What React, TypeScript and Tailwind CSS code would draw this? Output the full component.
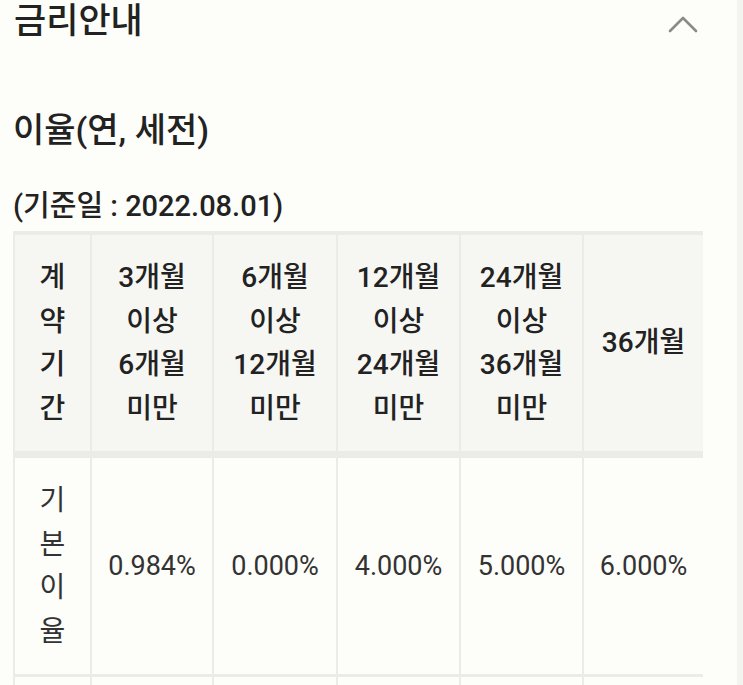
const font = { fontFamily: "Roboto, 'Noto Sans CJK KR', sans-serif" }

const headers = [
  ['3개월', '이상', '6개월', '미만'],
  ['6개월', '이상', '12개월', '미만'],
  ['12개월', '이상', '24개월', '미만'],
  ['24개월', '이상', '36개월', '미만'],
  ['36개월'],
]

const rates = ['0.984%', '0.000%', '4.000%', '5.000%', '6.000%']

const widths = ['w-[122px]', 'w-[124px]', 'w-[123px]', 'w-[123px]', 'w-[121px]']

function Stacked({ lines }: { lines: string[] }) {
  return (
    <>
      {lines.map((l, i) => (
        <div key={i}>{l}</div>
      ))}
    </>
  )
}

export default function App() {
  return (
    <div className="flex min-h-[685px] bg-[#fdfdf9] text-[#222]" style={font}>
      <div className="flex-1 pl-[13px]">
        <div className="flex h-[44px] items-center justify-between pr-[39px]">
          <h1 className="pl-[1px] text-[35px] font-medium leading-[44px] text-[#222]">금리안내</h1>
          <svg width="30" height="18" viewBox="0 0 30 18" fill="none" className="mt-[4px]">
            <polyline points="2,16 15,3 28,16" stroke="#8a8a8a" strokeWidth="2.6" strokeLinecap="round" strokeLinejoin="round" />
          </svg>
        </div>

        <h2 className="mt-[66px] text-[34px] font-medium leading-[40px]">이율(연, 세전)</h2>
        <p className="mt-[39px] text-[29px] font-medium leading-[34px]">(기준일 : 2022.08.01)</p>

        <div className="mt-[8px] w-[690px] overflow-hidden">
          <table className="w-[690px] table-fixed border-separate border-spacing-0 border-t-4 border-[#ebebe7]">
            <thead>
              <tr className="bg-[#f6f6f3]">
                <th className="w-[77px] border-b-[7px] border-l-2 border-[#ebebe7] py-[21px] text-center text-[28px] font-medium leading-[43.5px]">
                  <Stacked lines={['계', '약', '기', '간']} />
                </th>
                {headers.map((h, i) => (
                  <th
                    key={i}
                    className={`${widths[i]} border-b-[7px] border-l-2 border-[#ebebe7] py-[21px] text-center align-middle text-[28px] font-medium leading-[43.5px]`}
                  >
                    <Stacked lines={h} />
                  </th>
                ))}
              </tr>
            </thead>
            <tbody>
              <tr>
                <td className="border-b-[3px] border-l-2 border-[#ebebe7] py-[21px] text-center text-[28px] leading-[43.5px] text-[#333]">
                  <Stacked lines={['기', '본', '이', '율']} />
                </td>
                {rates.map((r) => (
                  <td
                    key={r}
                    className="border-b-[3px] border-l-2 border-[#ebebe7] text-center align-middle text-[27px] text-[#333]"
                  >
                    {r}
                  </td>
                ))}
              </tr>
              <tr>
                <td className="h-[40px] border-l-2 border-[#ebebe7]" />
                {rates.map((r) => (
                  <td key={r} className="border-l-2 border-[#ebebe7]" />
                ))}
              </tr>
            </tbody>
          </table>
        </div>
      </div>
      <div className="w-[6px] bg-[#f3f3f0]" />
    </div>
  )
}
